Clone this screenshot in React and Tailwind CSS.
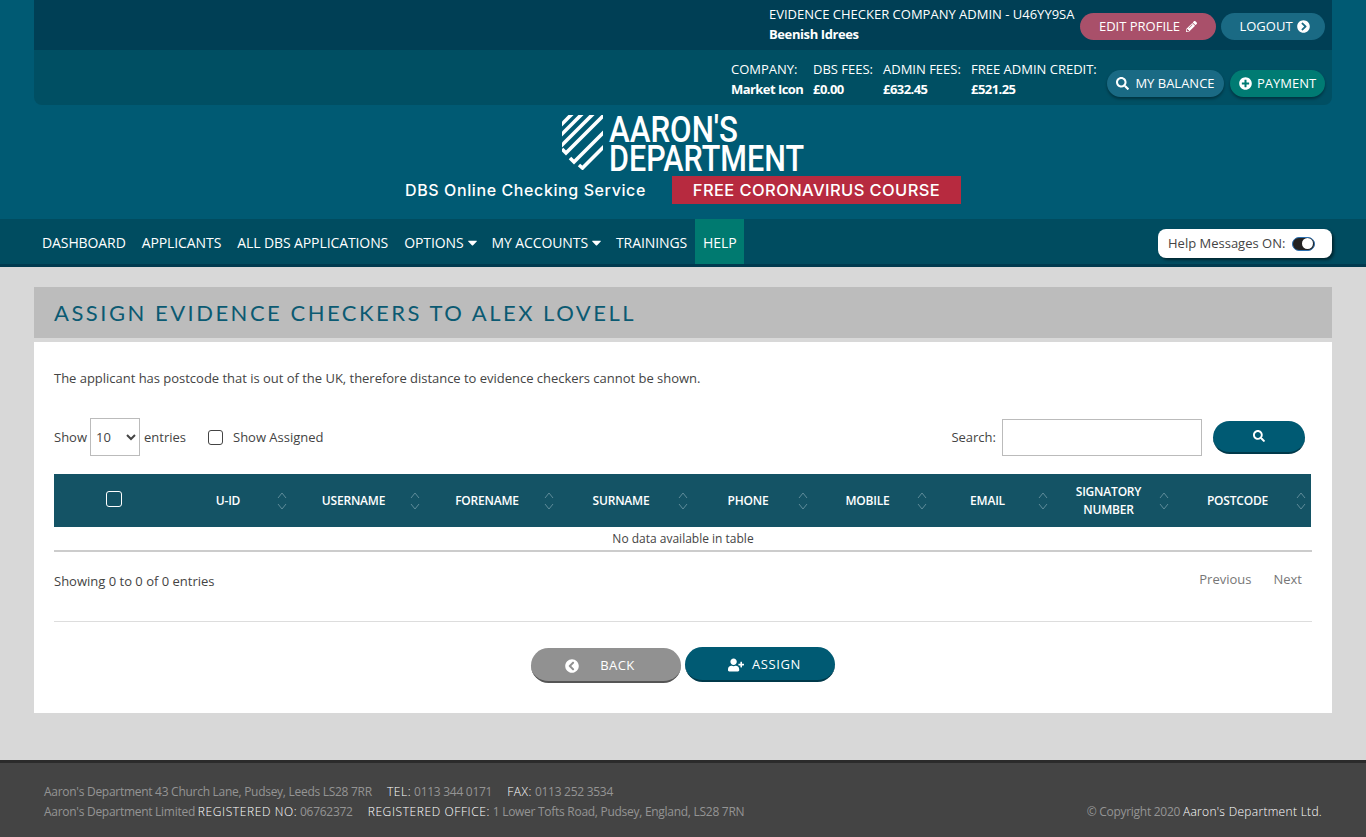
import { FaPencilAlt, FaChevronCircleRight, FaChevronCircleLeft, FaSearch, FaPlusCircle, FaCaretDown, FaUserPlus } from 'react-icons/fa';

const columns = [
  { label: 'U-ID', width: 'w-[118px]' },
  { label: 'USERNAME', width: 'w-[133px]' },
  { label: 'FORENAME', width: 'w-[134px]' },
  { label: 'SURNAME', width: 'w-[134px]' },
  { label: 'PHONE', width: 'w-[120px]' },
  { label: 'MOBILE', width: 'w-[119px]' },
  { label: 'EMAIL', width: 'w-[121px]' },
  { label: 'SIGNATORY NUMBER', width: 'w-[121px]' },
  { label: 'POSTCODE', width: 'w-[137px]' },
];

const navItems = [
  { label: 'DASHBOARD' },
  { label: 'APPLICANTS' },
  { label: 'ALL DBS APPLICATIONS' },
  { label: 'OPTIONS', caret: true },
  { label: 'MY ACCOUNTS', caret: true },
  { label: 'TRAININGS' },
];

const fees = [
  { label: 'COMPANY:', value: 'Market Icon', width: 'w-[82px]' },
  { label: 'DBS FEES:', value: '£0.00', width: 'w-[70px]' },
  { label: 'ADMIN FEES:', value: '£632.45', width: 'w-[88px]' },
  { label: 'FREE ADMIN CREDIT:', value: '£521.25', width: 'w-[136px]' },
];

const SortIcon = () => (
  <svg width="10" height="18" viewBox="0 0 10 18" fill="none" stroke="#5f8c9a" strokeWidth="1" className="shrink-0">
    <path d="M1 6 L5 1 L9 6" />
    <path d="M1 12 L5 17 L9 12" />
  </svg>
);

const Shield = () => (
  <svg width="41" height="55" viewBox="0 0 41 55" className="shrink-0">
    <defs>
      <clipPath id="shield">
        <rect x="0" y="0" width="41" height="55" />
      </clipPath>
    </defs>
    <g clipPath="url(#shield)" stroke="#fff" strokeWidth="3.6" fill="none">
      <path d="M-3 12 L12 -3" />
      <path d="M-3 22 L22 -3" />
      <path d="M-3 33 L33 -3" />
      <path d="M0 34 L4 38 L44 -2" />
      <path d="M8 43 L12 47 L44 15" />
      <path d="M17 50 L20.5 53 L44 29.5" />
    </g>
  </svg>
);

const App = () => {
  return (
    <div className="min-h-[837px] flex flex-col bg-[#d8d8d8] text-[13px] text-[#444] font-['Open_Sans',sans-serif]">
      <header className="h-[219px] bg-[#005a73]">
        <div className="mx-[34px] h-[105px] rounded-b-lg overflow-hidden">
          <div className="h-[50px] bg-[#003f55] flex justify-end items-start pr-[7px]">
            <div className="text-white leading-[20px] w-[311px] pt-[4px] whitespace-nowrap">
              <div>EVIDENCE CHECKER COMPANY ADMIN - U46YY9SA</div>
              <div className="font-bold tracking-[-0.4px]">Beenish Idrees</div>
            </div>
            <button className="mt-[13px] h-[27px] w-[136px] rounded-full bg-[#a9506a] text-white flex items-center justify-center gap-[6px]">
              EDIT PROFILE <FaPencilAlt size={11} />
            </button>
            <button className="mt-[13px] h-[27px] w-[104px] ml-[5px] pl-[3px] rounded-full bg-[#1a6a84] text-white flex items-center justify-center gap-[4px]">
              LOGOUT <FaChevronCircleRight size={13} />
            </button>
          </div>
          <div className="h-[55px] bg-[#004f63] flex justify-end items-start pr-[7px]">
            {fees.map((fee) => (
              <div key={fee.label} className={`${fee.width} text-white leading-[20px] pt-[9px] whitespace-nowrap`}>
                <div>{fee.label}</div>
                <div className="font-bold tracking-[-0.55px]">{fee.value}</div>
              </div>
            ))}
            <button className="mt-[20px] h-[27px] w-[117px] rounded-full bg-[#1a6a84] text-white flex items-center justify-center gap-[6px] shadow-[0_2px_3px_rgba(0,0,0,0.35)]">
              <FaSearch size={13} /> MY BALANCE
            </button>
            <button className="mt-[20px] h-[27px] w-[95px] ml-[6px] rounded-full bg-[#007b73] text-white flex items-center justify-center gap-[5px] shadow-[0_2px_3px_rgba(0,0,0,0.35)]">
              <FaPlusCircle size={13} /> PAYMENT
            </button>
          </div>
        </div>
        <div className="flex flex-col items-center pt-[10px]">
          <div className="flex gap-[6px] h-[57px]">
            <Shield />
            <svg width="196" height="57" viewBox="0 0 196 57" className="shrink-0 overflow-visible">
              <text x="0" y="27" fill="#fff" fontFamily="Roboto, sans-serif" fontWeight="500" fontSize="37" textLength="129" lengthAdjust="spacingAndGlyphs">AARON'S</text>
              <text x="0" y="56" fill="#fff" fontFamily="Roboto, sans-serif" fontWeight="500" fontSize="37" textLength="195" lengthAdjust="spacingAndGlyphs">DEPARTMENT</text>
            </svg>
          </div>
          <div className="flex items-center h-[28px] mt-[4px]">
            <span className="w-[267px] text-white text-[16px] font-medium tracking-[0.6px] font-['Inter',sans-serif] whitespace-nowrap">DBS Online Checking Service</span>
            <span className="w-[289px] h-[28px] bg-[#b72a3f] text-white text-[16.5px] font-medium tracking-[0.4px] font-['Inter',sans-serif] flex items-center justify-center whitespace-nowrap">FREE CORONAVIRUS COURSE</span>
          </div>
        </div>
      </header>

      <nav className="h-[48px] bg-[#004c60] border-b-[3px] border-[#003a4f]">
        <div className="mx-[34px] h-[45px] flex items-center text-[14px] tracking-[-0.1px]">
          {navItems.map((item) => (
            <a key={item.label} className="h-full px-[8px] pt-[1px] flex items-center gap-[1px] text-white whitespace-nowrap">
              {item.label}
              {item.caret && <FaCaretDown size={15} className="-mr-[4px]" />}
            </a>
          ))}
          <a className="h-full px-[8px] pt-[1px] flex items-center text-white bg-[#007a70]">HELP</a>
          <div className="ml-auto mt-[4px] h-[29px] w-[174px] rounded-lg bg-white flex items-center pl-[10px] gap-[7px] text-[13px] tracking-normal shadow-[2px_2px_3px_rgba(0,0,0,0.5)]">
            <span className="text-[#444] whitespace-nowrap">Help Messages ON:</span>
            <span className="w-[23px] h-[14px] rounded-full bg-[#222] flex items-center justify-end pr-[1px] border border-[#2a6fb0]">
              <span className="w-[11px] h-[11px] rounded-full bg-white" />
            </span>
          </div>
        </div>
      </nav>

      <main className="flex-1 px-[34px] pt-[20px] pb-[47px]">
        <div className="h-[51px] bg-[#bcbcbc] flex items-center px-[20px]">
          <h1 className="text-[22px] leading-none text-[#0b5a72] tracking-[2.5px] font-['Lato',sans-serif] whitespace-nowrap">ASSIGN EVIDENCE CHECKERS TO ALEX LOVELL</h1>
        </div>
        <section className="mt-[4px] h-[371px] bg-white px-[20px] pt-[27px]">
          <p className="leading-[18px] tracking-[-0.02px]">The applicant has postcode that is out of the UK, therefore distance to evidence checkers cannot be shown.</p>
          <div className="mt-[31px] h-[38px] flex items-center">
            <span className="mt-[2px]">Show</span>
            <select className="w-[50px] h-[38px] ml-[3px] border border-[#bbb] pl-[1px] bg-white text-[13px]">
              <option>10</option>
            </select>
            <span className="ml-[4px] mt-[2px]">entries</span>
            <span className="ml-[22px] w-[15px] h-[15px] rounded-[3px] border-[1.5px] border-[#444]" />
            <span className="ml-[10px] mt-[2px]">Show Assigned</span>
            <span className="ml-auto mt-[2px]">Search:</span>
            <input className="w-[200px] h-[37px] ml-[6px] border border-[#bbb]" />
            <button className="w-[92px] h-[33px] ml-[11px] mr-[7px] rounded-full bg-[#005a73] border-b-2 border-[#00394a] text-white flex items-center justify-center">
              <FaSearch size={12} />
            </button>
          </div>

          <div className="mt-[18px] w-[1257px] h-[53px] bg-[#145365] flex text-white text-[12px] font-semibold tracking-[-0.2px]">
            <div className="w-[120px] flex items-center justify-center">
              <span className="w-[16px] h-[16px] mb-[3px] rounded-[3px] border-[1.5px] border-white" />
            </div>
            {columns.map((col) => (
              <div key={col.label} className={`${col.width} flex items-center pl-[5px] pr-[5px]`}>
                <span className="flex-1 text-center leading-[18px] px-[8px]">{col.label}</span>
                <SortIcon />
              </div>
            ))}
          </div>
          <div className="h-[25px] border-b-2 border-[#ccc] flex items-center justify-center text-[12px]">No data available in table</div>

          <div className="h-[69px] flex items-start justify-between">
            <span className="mt-[20px]">Showing 0 to 0 of 0 entries</span>
            <div className="mt-[18px] pr-[10px] flex gap-[22px] text-[#777]">
              <span>Previous</span>
              <span>Next</span>
            </div>
          </div>
          <div className="border-t border-[#ddd]" />

          <div className="mt-[25px] flex justify-center gap-[4px]">
            <button className="mt-[1px] w-[150px] h-[35px] rounded-full bg-[#919191] border-b-2 border-[#555] text-white flex items-center justify-center gap-[21px] pr-[12px] pt-[2px] tracking-[0.4px]">
              <FaChevronCircleLeft size={14} /> BACK
            </button>
            <button className="w-[150px] h-[35px] rounded-full bg-[#005a73] border-b-2 border-[#00394a] text-white flex items-center justify-center gap-[8px] pl-[9px] pt-[2px] tracking-[0.6px]">
              <FaUserPlus size={16} /> ASSIGN
            </button>
          </div>
        </section>
      </main>

      <footer className="h-[77px] bg-[#444] border-t-[3px] border-[#2b2b2b] px-[44px] text-[12px] text-[#949494] flex justify-between items-start pt-[19px] leading-[20px] tracking-[-0.28px] whitespace-nowrap">
        <div>
          <div>
            Aaron's Department 43 Church Lane, Pudsey, Leeds LS28 7RR
            <span className="ml-[15px] text-white font-light tracking-[0.6px]">TEL:</span> 0113 344 0171
            <span className="ml-[15px] text-white font-light tracking-[0.6px]">FAX:</span> 0113 252 3534
          </div>
          <div>
            Aaron's Department Limited <span className="text-white font-light tracking-[0.6px]">REGISTERED NO:</span> 06762372
            <span className="ml-[15px] text-white font-light tracking-[0.6px]">REGISTERED OFFICE:</span> 1 Lower Tofts Road, Pudsey, England, LS28 7RN
          </div>
        </div>
        <div className="mt-[20px]">
          © Copyright 2020 <span className="text-white font-light tracking-[0.3px]">Aaron's Department Ltd.</span>
        </div>
      </footer>
    </div>
  );
};

export default App;
